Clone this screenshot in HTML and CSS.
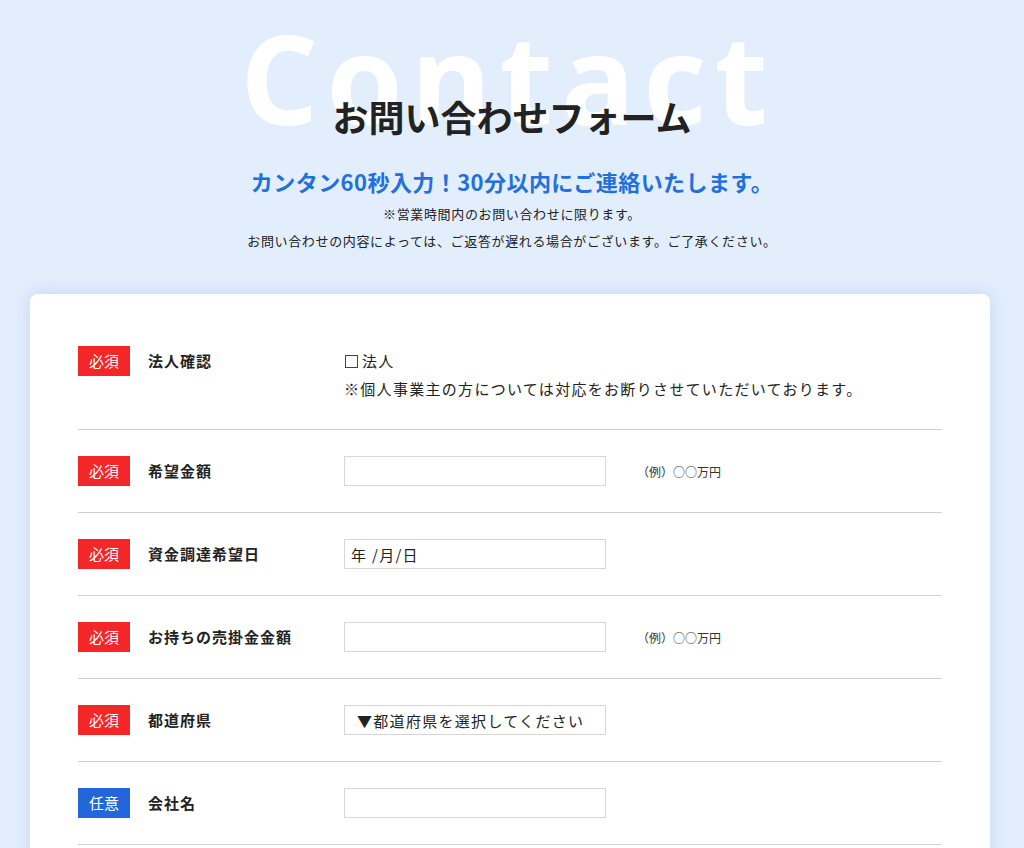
FILE: index.html
```html
<!DOCTYPE html>
<html lang="ja">

<head>
    <meta charset="UTF-8">
    <meta name="viewport" content="width=device-width, initial-scale=1.0">
    <title>お問い合わせフォーム</title>
    <link rel="stylesheet" href="styles.css">
</head>

<body>
    <div class="hero">
        <div class="hero_bg">Contact</div>
        <h1 class="hero_title">お問い合わせフォーム</h1>
        <p class="hero_lead">カンタン60秒入力！30分以内にご連絡いたします。</p>
        <p class="hero_note">※営業時間内のお問い合わせに限ります。</p>
        <p class="hero_note">お問い合わせの内容によっては、ご返答が遅れる場合がございます。ご了承ください。</p>
    </div>

    <form class="card">
        <div class="row">
            <span class="badge req">必須</span>
            <span class="label">法人確認</span>
            <div class="field field_text">
                <label class="check"><input type="checkbox">法人</label>
                <p>※個人事業主の方については対応をお断りさせていただいております。</p>
            </div>
        </div>
        <div class="row">
            <span class="badge req">必須</span>
            <span class="label">希望金額</span>
            <div class="field">
                <input class="input" type="text">
                <span class="hint">（例）○○万円</span>
            </div>
        </div>
        <div class="row">
            <span class="badge req">必須</span>
            <span class="label">資金調達希望日</span>
            <div class="field">
                <input class="input input_date" type="text" value="年 /月/日">
            </div>
        </div>
        <div class="row">
            <span class="badge req">必須</span>
            <span class="label">お持ちの売掛金金額</span>
            <div class="field">
                <input class="input" type="text">
                <span class="hint">（例）○○万円</span>
            </div>
        </div>
        <div class="row">
            <span class="badge req">必須</span>
            <span class="label">都道府県</span>
            <div class="field">
                <select class="input select">
                    <option>▼都道府県を選択してください</option>
                </select>
            </div>
        </div>
        <div class="row">
            <span class="badge opt">任意</span>
            <span class="label">会社名</span>
            <div class="field">
                <input class="input" type="text">
            </div>
        </div>
        <div class="row">
            <span class="badge req">必須</span>
            <span class="label">お名前</span>
            <div class="field">
                <input class="input" type="text">
            </div>
        </div>
    </form>
</body>

</html>
```

FILE: styles.css
```css
* {
    margin: 0;
    padding: 0;
    box-sizing: border-box;
}

body {
    background: #e3eefd;
    color: #222;
    font-family: "Noto Sans CJK JP", "Noto Sans", sans-serif;
    letter-spacing: 0.04em;
}

.hero {
    position: relative;
    text-align: center;
    padding-top: 91px;
}

/* 背景の大きな英字 */
.hero_bg {
    position: absolute;
    top: 16px;
    left: 0;
    right: 8px;
    font-family: "Open Sans", "Noto Sans", sans-serif;
    font-weight: 700;
    font-size: 123px;
    line-height: 1;
    letter-spacing: 8px;
    color: #fff;
}

.hero_title {
    position: relative;
    font-size: 36px;
    line-height: 50px;
    font-weight: 700;
    letter-spacing: 0;
    color: #222;
}

.hero_lead {
    margin-top: 24px;
    margin-bottom: 2px;
    font-size: 22px;
    line-height: 33px;
    font-weight: 700;
    letter-spacing: 0.02em;
    color: #2270dc;
}

.hero_note {
    font-size: 13px;
    line-height: 27px;
    color: #222;
}

.card {
    width: 960px;
    margin: 40px 0 0 30px;
    padding: 26px 48px;
    background: #fff;
    border-radius: 8px;
    box-shadow: 0 0 18px rgba(120, 160, 230, 0.3);
    letter-spacing: 1.3px;
}

.row {
    display: flex;
    align-items: flex-start;
    padding: 26px 0;
    border-bottom: 1px solid #cfcfcf;
}

.badge {
    flex: none;
    width: 52px;
    height: 30px;
    line-height: 30px;
    text-align: center;
    font-size: 15px;
    color: #fff;
    letter-spacing: 0;
}

.badge.req {
    background: #f32628;
}

.badge.opt {
    background: #2266d9;
}

.label {
    flex: none;
    width: 196px;
    margin-left: 18px;
    font-size: 15px;
    line-height: 30px;
    font-weight: 700;
    letter-spacing: 1px;
}

.field {
    display: flex;
    align-items: center;
}

.field_text {
    display: block;
    font-size: 15px;
    line-height: 28px;
    padding-top: 1px;
}

.check {
    display: flex;
    align-items: center;
}

.check input {
    appearance: none;
    width: 13px;
    height: 13px;
    border: 1px solid #444;
    margin: 0 4px 0 1px;
}

.input {
    width: 262px;
    height: 30px;
    border: 1px solid #d6d6d6;
    background: #fff;
    font-family: inherit;
    font-size: 15px;
    color: #222;
    letter-spacing: 1.3px;
    outline: none;
}

.input_date {
    padding-left: 6px;
}

.select {
    appearance: none;
    padding-left: 12px;
    border-radius: 0;
}

.hint {
    margin-left: 31px;
    font-size: 12px;
    color: #333;
    letter-spacing: 0;
}
```
